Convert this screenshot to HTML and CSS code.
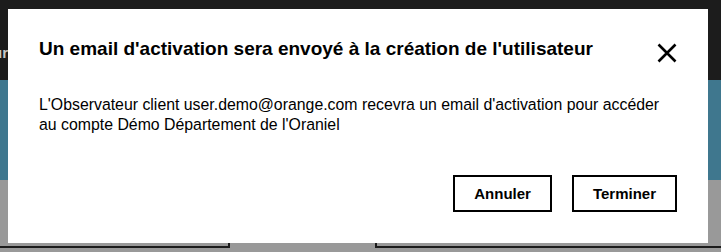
FILE: index.html
```html
<!DOCTYPE html>
<html lang="fr">
<head>
<meta charset="utf-8">
<link rel="stylesheet" href="styles.css">
</head>
<body>
<div class="page">
  <header class="topbar"><span class="nav-clip"><span class="nav-item">Observateur</span></span></header>
  <div class="band"></div>
  <main class="content">
    <div class="card card-left"></div>
    <div class="card card-right"></div>
  </main>
</div>
<div class="modal" role="dialog">
  <div class="modal-head">
    <h1 class="modal-title">Un email d'activation sera envoyé à la création de l'utilisateur</h1>
    <button class="close" aria-label="Fermer">
      <svg width="20" height="20" viewBox="0 0 20 20"><path d="M1.5 1.5L18.5 18.5M18.5 1.5L1.5 18.5" stroke="#000" stroke-width="2.6" fill="none"/></svg>
    </button>
  </div>
  <p class="modal-body">L'Observateur client user.demo@orange.com recevra un email d'activation pour accéder au compte Démo Département de l'Oraniel</p>
  <div class="modal-foot">
    <button class="btn">Annuler</button>
    <button class="btn">Terminer</button>
  </div>
</div>
</body>
</html>
```
FILE: styles.css
```css
* { box-sizing: border-box; }
html, body { margin: 0; padding: 0; }
body {
  width: 721px;
  height: 252px;
  overflow: hidden;
  font-family: "Liberation Sans", Arial, sans-serif;
  background: #999999;
}
.page { display: flex; flex-direction: column; }
.topbar {
  height: 80px;
  background: #1c1c1c;
  display: flex;
  align-items: center;
}
.nav-clip {
  width: 8px;
  overflow: hidden;
  display: flex;
  justify-content: flex-end;
  margin-top: 24px;
}
.nav-item {
  color: #c8c8c8;
  font-size: 15px;
  font-weight: bold;
  white-space: nowrap;
}
.band { height: 100px; background: #3f778e; }
.content {
  display: flex;
  gap: 145px;
}
.card {
  height: 68px;
  border-bottom: 2px solid #1c1c1c;
}
.card-left { width: 230px; border-right: 2px solid #1c1c1c; }
.card-right { flex: 1; border-left: 2px solid #1c1c1c; }

.modal {
  position: fixed;
  left: 8px;
  top: 9px;
  width: 700px;
  height: 234px;
  background: #fff;
  padding: 28px 31px 31px;
  display: flex;
  flex-direction: column;
  color: #000;
}
.modal-head {
  display: flex;
  justify-content: space-between;
  align-items: flex-start;
}
.modal-title {
  margin: 0;
  font-size: 19px;
  line-height: 24px;
  font-weight: bold;
}
.close {
  border: 0;
  background: none;
  padding: 0;
  margin-top: 6px;
  width: 20px;
  height: 20px;
  display: block;
}
.close svg { display: block; }
.modal-body {
  margin: 32px 0 0;
  font-size: 15.85px;
  line-height: 20px;
}
.modal-foot {
  margin-top: auto;
  display: flex;
  justify-content: flex-end;
  gap: 20px;
}
.btn {
  height: 37px;
  border: 2px solid #000;
  background: #fff;
  color: #000;
  font-family: "Liberation Sans", Arial, sans-serif;
  font-size: 15px;
  font-weight: bold;
  padding: 0 19px;
}
```
